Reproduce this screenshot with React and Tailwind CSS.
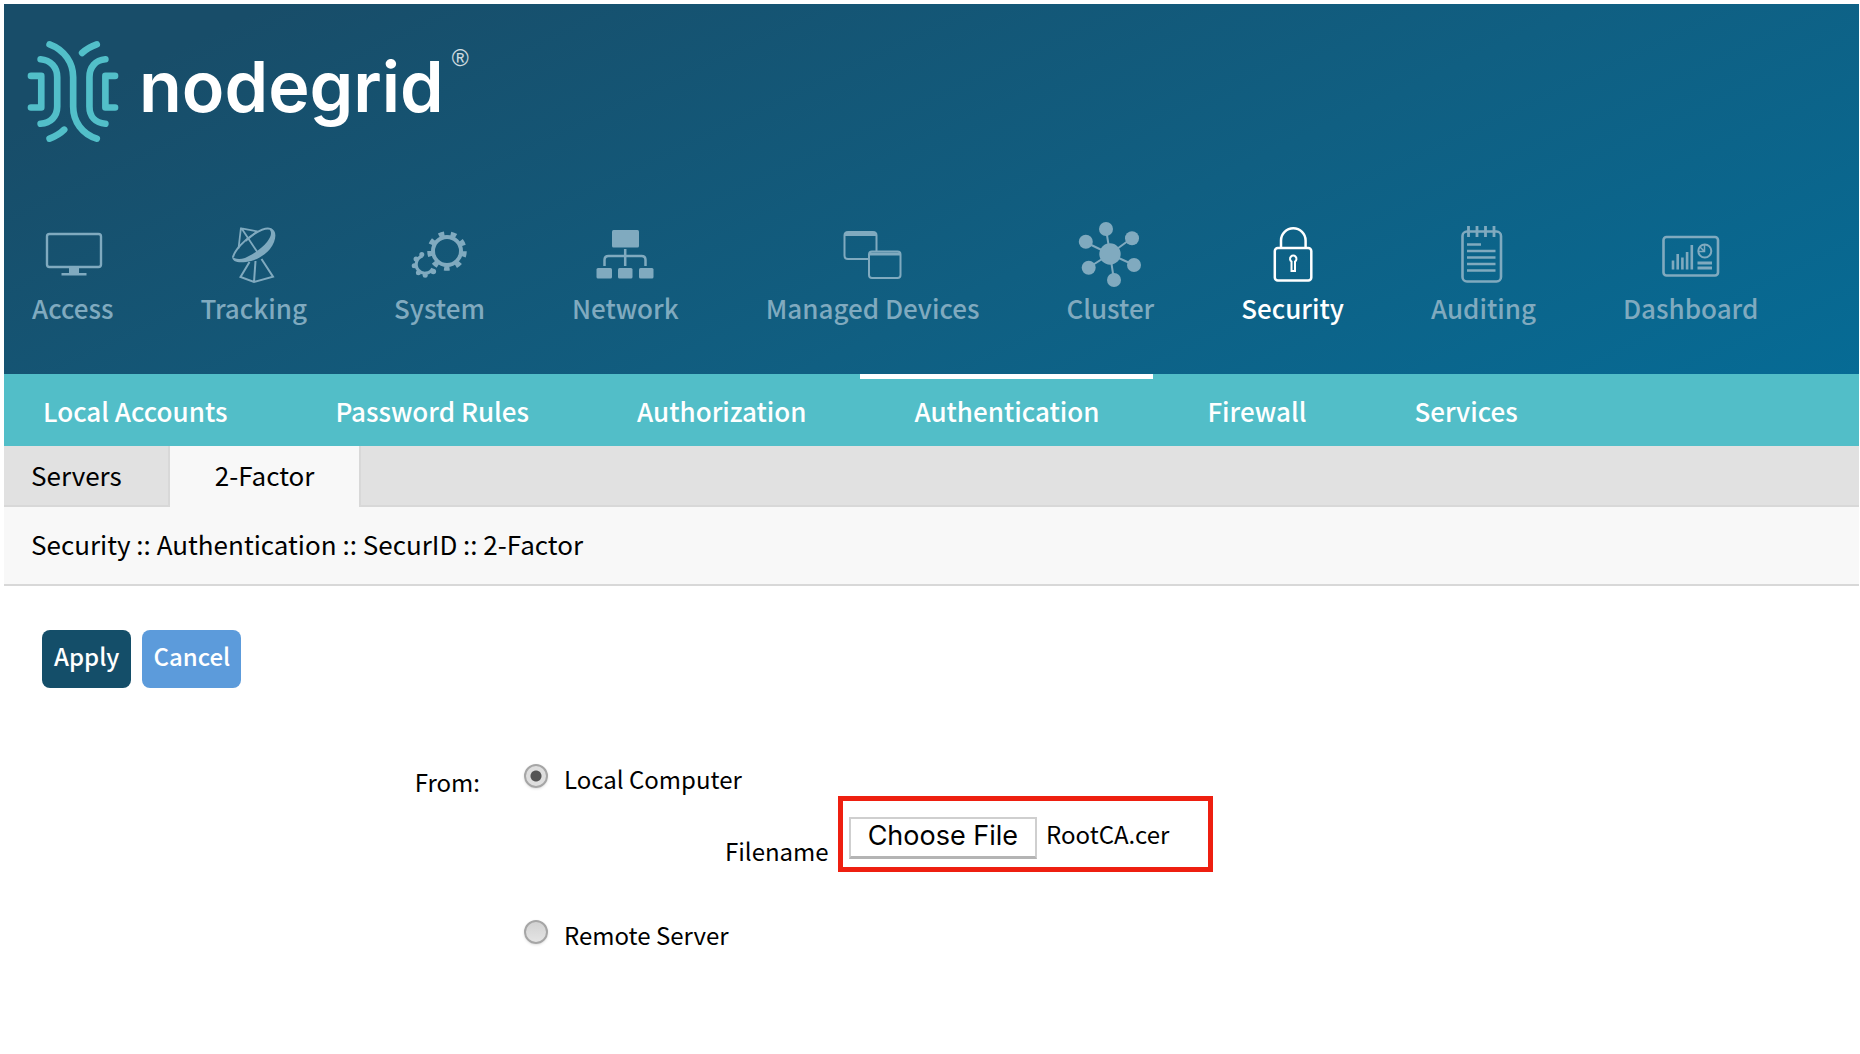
import { useRef, useState } from "react";

const MENU = [
    { label: "Access", Icon: MonitorIcon },
    { label: "Tracking", Icon: DishIcon },
    { label: "System", Icon: GearsIcon },
    { label: "Network", Icon: NetworkIcon },
    { label: "Managed Devices", Icon: WindowsIcon },
    { label: "Cluster", Icon: ClusterIcon },
    { label: "Security", Icon: LockIcon },
    { label: "Auditing", Icon: NotepadIcon },
    { label: "Dashboard", Icon: DashboardIcon },
];

const SUBMENU = [
    "Local Accounts",
    "Password Rules",
    "Authorization",
    "Authentication",
    "Firewall",
    "Services",
];

const TABS = ["Servers", "2-Factor"];

function Icon({ children }) {
    return (
        <svg
            className="h-[66px] w-16"
            viewBox="0 0 64 66"
            fill="none"
            stroke="currentColor"
            strokeWidth="2"
            aria-hidden="true"
        >
            {children}
        </svg>
    );
}

function MonitorIcon() {
    return (
        <Icon>
            <rect x="6" y="12" width="54" height="33" rx="2.500" strokeWidth="2.400" />
            <path d="M28 45h10v6h7.500v2.500h-25V51h7.500z" fill="currentColor" stroke="none" />
        </Icon>
    );
}

function DishIcon() {
    return (
        <Icon>
            <path d="M11 35C13 28 22 18 32 12C40 7 47 5 50 8" />
            <path
                d="M49 6.500C55 8 55 18 48 27C42 34 33 39 24 40C16 41 10 40 10 34C12 37 17 38 23 36C32 32 40 26 45 20C49 15 50 11 48 8z"
                fill="currentColor"
                stroke="none"
            />
            <path d="M19.500 6.300L36 31M19.500 6.300L35.500 9.500M19 5.500l-2.500 21M35 9.500L23.500 19" strokeWidth="1.800" />
            <path d="M27.500 40L18.500 55L32 60L51 54.700L39.500 37M33.500 39L32 60" />
        </Icon>
    );
}

function GearsIcon() {
    return (
        <Icon>
            <circle cx="40" cy="29" r="14" strokeWidth="4" />
            <circle
                cx="40"
                cy="29"
                r="17.500"
                strokeWidth="4.500"
                strokeDasharray="5.600 6.617"
                strokeDashoffset="-0.250"
            />
            <path d="M15.500 34A8.800 8.800 0 1 0 25.800 46.500" strokeWidth="3.200" />
            <g fill="currentColor" stroke="none">
                <circle cx="14.800" cy="32.600" r="2.500" />
                <circle cx="9" cy="37" r="2.500" />
                <circle cx="7.200" cy="43.700" r="2.500" />
                <circle cx="11.400" cy="50.800" r="2.500" />
                <circle cx="18.200" cy="53.300" r="2.500" />
                <circle cx="26.300" cy="49.500" r="2.800" />
            </g>
        </Icon>
    );
}

function NetworkIcon() {
    return (
        <Icon>
            <g fill="currentColor" stroke="none">
                <rect x="19" y="8" width="27" height="17.500" rx="1.500" />
                <rect x="3.500" y="46" width="15.500" height="10.500" rx="1.500" />
                <rect x="25" y="46" width="14.500" height="10.500" rx="1.500" />
                <rect x="46" y="46" width="14.500" height="10.500" rx="1.500" />
            </g>
            <path d="M32.200 27v17M11.500 44v-6q0-4 4-4h33q4 0 4 4v6" strokeWidth="2.500" />
        </Icon>
    );
}

function WindowsIcon() {
    return (
        <Icon>
            <path d="M28 37H7q-3.500 0-3.500-3.500V13.500Q3.500 10 7 10h25q3.500 0 3.500 3.500V29" />
            <rect x="28" y="29.500" width="31.500" height="26.500" rx="3" />
            <path d="M4 12.500h31M28.500 32h30.500" strokeWidth="3" />
        </Icon>
    );
}

function ClusterIcon() {
    return (
        <Icon>
            <path
                d="M32 32L28 7M32 32L54 16M32 32L56 43M32 32L36 58M32 32L10 46M32 32L7 20"
                strokeWidth="2"
            />
            <g fill="currentColor" stroke="none">
                <circle cx="32" cy="32" r="10.700" />
                <circle cx="28" cy="7" r="7" />
                <circle cx="54" cy="16.300" r="7" />
                <circle cx="56" cy="43" r="7" />
                <circle cx="36" cy="58" r="7" />
                <circle cx="10.700" cy="45.700" r="7" />
                <circle cx="7.800" cy="19.700" r="7" />
            </g>
        </Icon>
    );
}

function LockIcon() {
    return (
        <Icon>
            <rect x="13.800" y="26" width="36.500" height="32.500" rx="3" strokeWidth="2.500" />
            <path d="M20 26V18.500a12.300 12.300 0 0 1 24.600 0V26" strokeWidth="2.500" />
            <path d="M30.500 39.500a3.200 3.200 0 1 1 3.500 0V49h-3.500z" strokeWidth="2" />
        </Icon>
    );
}

function NotepadIcon() {
    return (
        <Icon>
            <rect x="11.500" y="9.500" width="38.500" height="50" rx="4.500" strokeWidth="2.600" />
            <path d="M17.500 4v11M26 4v11M34.500 4v11M43 4v11" strokeWidth="2.800" />
            <path d="M16 22.500h14M16 29h28.500M16 35.500h28.500M16 42h28.500M16 48.500h28.500" strokeWidth="2.600" />
        </Icon>
    );
}

function DashboardIcon() {
    return (
        <Icon>
            <rect x="4.500" y="15" width="54.500" height="38.500" rx="3" strokeWidth="2.600" />
            <path d="M14 47.500v-9M18.700 47.500V32M23.400 47.500V35.500M28.100 47.500V30M32.800 47.500V23" strokeWidth="2.600" />
            <circle cx="45.800" cy="29" r="6.500" />
            <path d="M45.500 23v6.500H40M45 29l-4-4" strokeWidth="1.500" />
            <path d="M38.500 41H53M38.500 46H53" strokeWidth="2.800" />
        </Icon>
    );
}

function Logo() {
    return (
        <a href="#" className="flex w-fit items-start text-white">
            <svg
                className="h-[103px] w-[92px]"
                viewBox="80 120 275 310"
                fill="none"
                stroke="#52bfc9"
                strokeWidth="20"
                strokeLinecap="round"
                strokeLinejoin="round"
                aria-hidden="true"
            >
                <path d="M91 228H122V323H91" />
                <path d="M120 178C150 180 170 202 170 232V320C170 350 150 370 120 372" />
                <path d="M147 133C193 150 218 190 218 232V320C218 366 245 402 289 417" />
                <path d="M315 178C285 180 267 202 267 232V320C267 350 285 370 315 372" />
                <path d="M344 228H315V323H344" />
                <path d="M289 133C270 140 255 149 245 159M147 417C165 410 180 401 191 390" />
            </svg>
            <span className="ml-5 font-[Inter] text-[70px] leading-[93px] font-semibold">
                nodegrid
            </span>
            <span className="ml-2 font-['Liberation_Sans'] text-[23px] leading-9 text-white/80">
                ®
            </span>
        </a>
    );
}

function RadioOption({ id, value, selected, onSelect, children }) {
    return (
        <div className="flex items-start">
            <input
                type="radio"
                id={id}
                name="source"
                value={value}
                checked={selected === value}
                onChange={() => onSelect(value)}
                className="size-6 appearance-none rounded-full border-2 border-[#a6a6a6] bg-[linear-gradient(#d2d2d2,#e4e4e4)] shadow-sm checked:bg-[radial-gradient(circle,#555_0_5px,#dedede_6px)]"
            />
            <label htmlFor={id} className="ml-4 leading-[30px]">
                {children}
            </label>
        </div>
    );
}

export default function App() {
    const [source, setSource] = useState("local");
    const fileRef = useRef(null);

    return (
        <div className="min-h-screen bg-white pt-1 pr-px pl-1 font-['Noto_Sans_CJK_SC',sans-serif] text-[24px] text-black">
            {/* Header */}
            <header className="bg-[linear-gradient(155deg,#184d69_10%,#105f82_60%,#066b95)]">
                <div className="px-[23px] pt-9">
                    <Logo />
                </div>
                <nav className="flex gap-[87px] px-7 pt-[79px] pb-12 text-[26px] font-medium">
                    {MENU.map(({ label, Icon: MenuIcon }) => (
                        <a
                            key={label}
                            href="#"
                            className={
                                label === "Security"
                                    ? "flex flex-col items-center gap-[2px] leading-9 whitespace-nowrap text-white"
                                    : "flex flex-col items-center gap-[2px] leading-9 whitespace-nowrap text-[#80aabf]"
                            }
                        >
                            <MenuIcon />
                            {label}
                        </a>
                    ))}
                </nav>
            </header>

            {/* Section menu */}
            <nav className="flex bg-[#52bec8] text-[26px] font-medium text-white">
                {SUBMENU.map((label) => (
                    <a
                        key={label}
                        href="#"
                        className={
                            label === "Authentication"
                                ? "border-t-[5px] border-white px-[54px] pt-[14px] pb-[17px] leading-9 whitespace-nowrap"
                                : "border-t-[5px] border-transparent px-[54px] pt-[14px] pb-[17px] leading-9 whitespace-nowrap first:pl-[39px]"
                        }
                    >
                        {label}
                    </a>
                ))}
            </nav>

            {/* Tabs */}
            <nav className="flex bg-[#e1e1e1] text-[26px] leading-9">
                {TABS.map((label) => (
                    <a
                        key={label}
                        href="#"
                        className={
                            label === "2-Factor"
                                ? "border-x-2 border-[#d8d8d8] bg-[#f8f8f8] px-[45px] pt-[11px] pb-[14px]"
                                : "border-b-2 border-[#d8d8d8] pt-[11px] pr-[46px] pb-3 pl-[27px]"
                        }
                    >
                        {label}
                    </a>
                ))}
                <div className="grow border-b-2 border-[#d8d8d8]" />
            </nav>
            <div className="border-b-2 border-[#d8d8d8] bg-[#f8f8f8] px-[27px] pt-[19px] pb-[22px] text-[26px] leading-9">
                Security :: Authentication :: SecurID :: 2-Factor
            </div>

            <form onSubmit={(e) => e.preventDefault()}>
                <div className="flex gap-[11px] px-[38px] pt-11 font-medium text-white">
                    <button className="rounded-lg bg-[#144e69] px-3 pt-2 pb-[14px] leading-9">
                        Apply
                    </button>
                    <button type="button" className="rounded-lg bg-[#5c9bdb] px-[11px] pt-2 pb-[14px] leading-9">
                        Cancel
                    </button>
                </div>

                <div
                    className="flex pt-[76px]"
                    role="radiogroup"
                    aria-labelledby="from-label"
                >
                    <div id="from-label" className="w-[476px] pt-[3px] text-right leading-[30px]">
                        From:
                    </div>
                    <div className="ml-11">
                        <RadioOption id="local" value="local" selected={source} onSelect={setSource}>
                            Local Computer
                        </RadioOption>
                        <div className="flex items-end pt-[2px] pl-[201px]">
                            <label htmlFor="file" className="pb-[5px] leading-8">
                                Filename
                            </label>
                            <div className="ml-[9px] flex w-[375px] items-start border-[5px] border-[#ee1f10] px-[6px] pt-4 pb-2">
                                <input ref={fileRef} id="file" type="file" className="hidden" />
                                <button
                                    type="button"
                                    onClick={() => fileRef.current.click()}
                                    className="h-[42px] border-2 border-b-[3px] border-[#cfcfcf] border-b-[#b4b4b4] px-[17px] pb-1 font-[Inter] text-[27px] leading-8"
                                >
                                    Choose File
                                </button>
                                <span className="ml-[9px] pt-px leading-8">RootCA.cer</span>
                            </div>
                        </div>
                        <div className="pt-12">
                            <RadioOption id="remote" value="remote" selected={source} onSelect={setSource}>
                                Remote Server
                            </RadioOption>
                        </div>
                    </div>
                </div>
            </form>
        </div>
    );
}
